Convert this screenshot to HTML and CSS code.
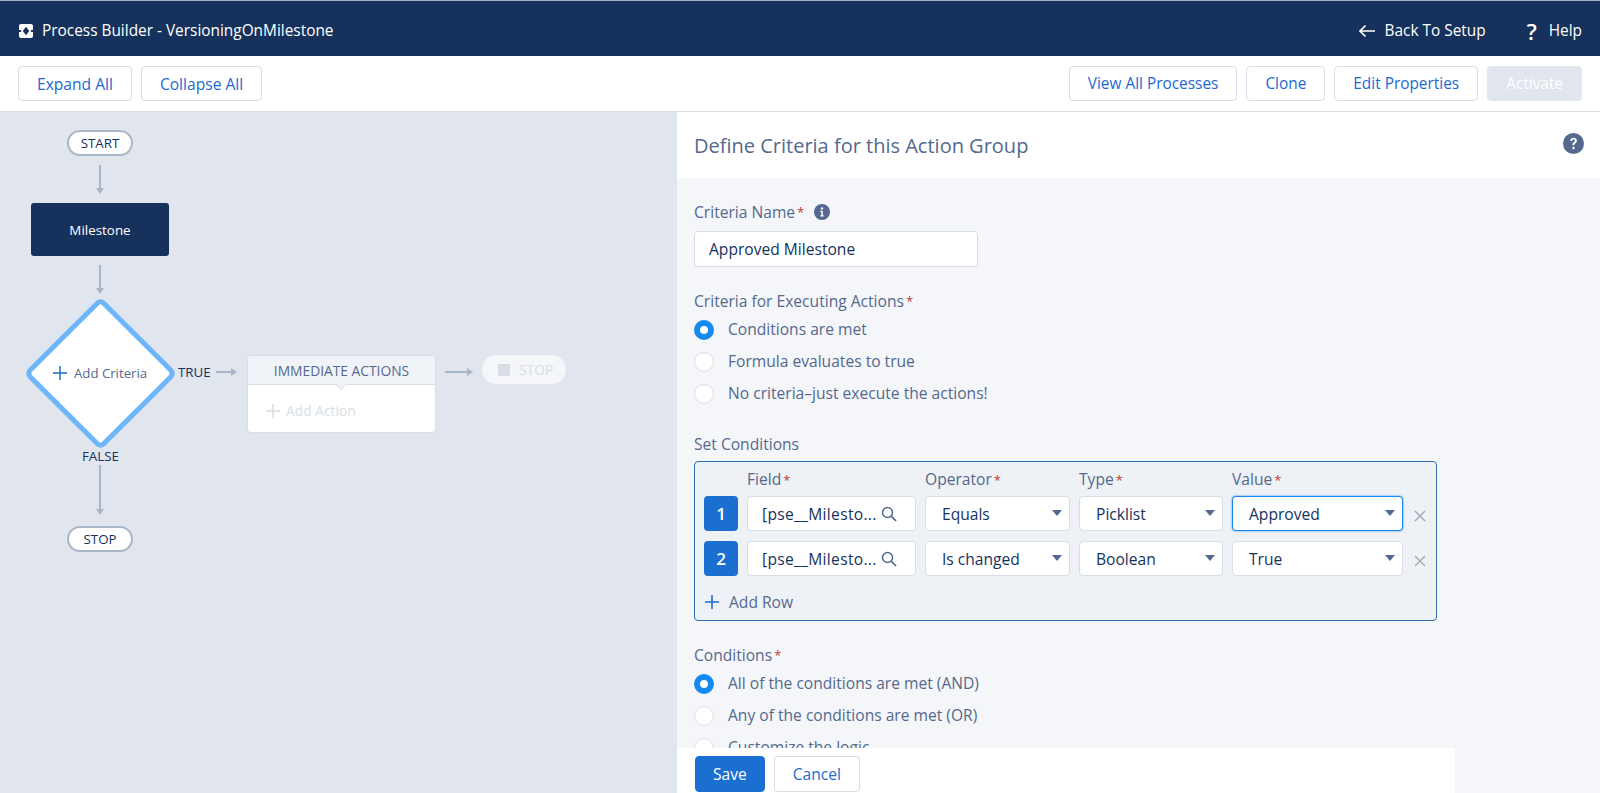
FILE: index.html
```html
<!DOCTYPE html>
<html lang="en">
  <head>
    <meta charset="UTF-8" />
    <meta name="viewport" content="width=device-width, initial-scale=1" />
    <title>Process Builder - VersioningOnMilestone</title>
    <link rel="stylesheet" href="styles.css">
  </head>
  <body>
    <header class="topbar">
      <div class="brand">
        <svg class="brand-icon" viewBox="0 0 14 14"><rect width="14" height="14" rx="2" fill="#fff"/><path d="M7 2.8 10.2 7 7 11.2 3.8 7Z" fill="#16325c"/><path d="M0 6h1.6L2.6 7 1.6 8H0zM14 6h-1.6L11.4 7l1 1H14z" fill="#16325c"/></svg>
        <span>Process Builder - VersioningOnMilestone</span>
      </div>
      <nav class="topnav">
        <a class="topnav-link">
          <svg class="back-icon" viewBox="0 0 18 14"><path d="M17 7H2M7.5 1.5 2 7l5.5 5.5" fill="none" stroke="#fff" stroke-width="1.7"/></svg>
          Back To Setup
        </a>
        <a class="topnav-link help-link"><span class="help-mark">?</span>Help</a>
      </nav>
    </header>

    <div class="toolbar">
      <div class="btn-group">
        <button class="btn">Expand All</button>
        <button class="btn">Collapse All</button>
      </div>
      <div class="btn-group btn-group-right">
        <button class="btn">View All Processes</button>
        <button class="btn">Clone</button>
        <button class="btn">Edit Properties</button>
        <button class="btn btn-disabled">Activate</button>
      </div>
    </div>

    <main class="workspace">
      <section class="canvas">
        <svg class="wires" width="677" height="681" viewBox="0 112 677 681">
          <g fill="none" stroke="#a9b6c8" stroke-width="2">
            <path d="M100 165V190"/>
            <path d="M100 265V290"/>
            <path d="M100 465V511"/>
            <path d="M216 372H233"/>
            <path d="M445 372H469"/>
          </g>
          <g fill="#a9b6c8">
            <path d="M96 188h8l-4 6z"/>
            <path d="M96 288h8l-4 6z"/>
            <path d="M96 509h8l-4 6z"/>
            <path d="M231 368v8l6-4z"/>
            <path d="M467 368v8l6-4z"/>
          </g>
        </svg>

        <div class="pill pill-start">START</div>
        <div class="node-object">Milestone</div>

        <div class="diamond"></div>
        <div class="add-criteria">
          <svg class="plus" viewBox="0 0 14 14"><path d="M7 0V14M0 7H14" stroke="#1b6fd0" stroke-width="1.5"/></svg>
          Add Criteria
        </div>

        <div class="flow-label label-true">TRUE</div>
        <div class="flow-label label-false">FALSE</div>

        <div class="actions">
          <div class="actions-head">IMMEDIATE ACTIONS</div>
          <div class="actions-body">
            <svg class="plus" viewBox="0 0 14 14"><path d="M7 0V14M0 7H14" stroke="#d8dde6" stroke-width="1.5"/></svg>
            Add Action
          </div>
        </div>

        <div class="pill-ghost"><span class="stop-square"></span>STOP</div>
        <div class="pill pill-stop">STOP</div>
      </section>

      <section class="panel">
        <div class="panel-head">
          <h2>Define Criteria for this Action Group</h2>
          <svg class="help-round" viewBox="0 0 20 20"><circle cx="10" cy="10" r="10" fill="#54698d"/><path d="M6.9 7.6C7 5.6 8.3 4.6 10.1 4.6c1.9 0 3.1 1.1 3.1 2.7 0 1.3-.7 1.9-1.6 2.6-.7.5-.9.9-.9 1.7H9c0-1.3.4-2 1.3-2.7.7-.5 1.1-.9 1.1-1.5 0-.8-.5-1.3-1.3-1.3-.9 0-1.4.6-1.5 1.5z" fill="#fff"/><circle cx="10" cy="14.2" r="1.2" fill="#fff"/></svg>
        </div>

        <div class="form">
          <div class="field-label">Criteria Name<span class="req">*</span>
            <svg class="info" viewBox="0 0 16 16"><circle cx="8" cy="8" r="8" fill="#54698d"/><circle cx="8" cy="4.4" r="1.2" fill="#fff"/><path d="M6.4 6.8h2.4v4.4h.9v1.2H6.4v-1.2h.9V8H6.4z" fill="#fff"/></svg>
          </div>
          <div class="input input-name">Approved Milestone</div>

          <div class="field-label gap-top">Criteria for Executing Actions<span class="req">*</span></div>
          <div class="radios">
            <div class="radio-row"><span class="radio radio-on"></span>Conditions are met</div>
            <div class="radio-row"><span class="radio"></span>Formula evaluates to true</div>
            <div class="radio-row"><span class="radio"></span>No criteria–just execute the actions!</div>
          </div>

          <div class="field-label gap-top">Set Conditions</div>
          <div class="cond-box">
            <div class="cond-grid cond-head">
              <span></span>
              <span class="col-label">Field<span class="req">*</span></span>
              <span class="col-label">Operator<span class="req">*</span></span>
              <span class="col-label">Type<span class="req">*</span></span>
              <span class="col-label">Value<span class="req">*</span></span>
            </div>

            <div class="cond-grid cond-row">
              <span class="badge">1</span>
              <div class="input input-lookup"><span class="lookup-text">[pse__Milesto...</span>
                <svg class="search" viewBox="0 0 16 16"><circle cx="6.5" cy="6.5" r="5" fill="none" stroke="#54698d" stroke-width="1.5"/><path d="M10.2 10.2 15 15" stroke="#54698d" stroke-width="1.7"/></svg>
              </div>
              <div class="input select">Equals</div>
              <div class="input select">Picklist</div>
              <div class="input select select-focus">Approved</div>
              <svg class="remove" viewBox="0 0 12 12"><path d="M1 1 11 11M11 1 1 11" stroke="#a8adb5" stroke-width="1.5"/></svg>
            </div>

            <div class="cond-grid cond-row">
              <span class="badge">2</span>
              <div class="input input-lookup"><span class="lookup-text">[pse__Milesto...</span>
                <svg class="search" viewBox="0 0 16 16"><circle cx="6.5" cy="6.5" r="5" fill="none" stroke="#54698d" stroke-width="1.5"/><path d="M10.2 10.2 15 15" stroke="#54698d" stroke-width="1.7"/></svg>
              </div>
              <div class="input select">Is changed</div>
              <div class="input select">Boolean</div>
              <div class="input select">True</div>
              <svg class="remove" viewBox="0 0 12 12"><path d="M1 1 11 11M11 1 1 11" stroke="#a8adb5" stroke-width="1.5"/></svg>
            </div>

            <div class="add-row">
              <svg class="plus" viewBox="0 0 14 14"><path d="M7 0V14M0 7H14" stroke="#1b6fd0" stroke-width="1.6"/></svg>
              Add Row
            </div>
          </div>

          <div class="field-label gap-top">Conditions<span class="req">*</span></div>
          <div class="radios">
            <div class="radio-row"><span class="radio radio-on"></span>All of the conditions are met (AND)</div>
            <div class="radio-row"><span class="radio"></span>Any of the conditions are met (OR)</div>
            <div class="radio-row"><span class="radio"></span>Customize the logic</div>
          </div>
        </div>

        <div class="panel-foot">
          <button class="btn btn-primary">Save</button>
          <button class="btn">Cancel</button>
        </div>
      </section>
    </main>
  </body>
</html>
```

FILE: styles.css
```css
* {
  box-sizing: border-box;
}
html,
body {
  margin: 0;
  height: 793px;
  overflow: hidden;
}
body {
  font-family: "Open Sans", "Noto Sans", sans-serif;
  font-size: 15.6px;
  color: #16325c;
  background: #fff;
}

/* top bar */
.topbar {
  height: 56px;
  background: #16325c;
  border-top: 1px solid #9fb0c6;
  color: #fff;
  display: flex;
  justify-content: space-between;
  align-items: center;
  padding: 4px 18px 0 19px;
  font-size: 15.4px;
}
.brand {
  display: flex;
  align-items: center;
  gap: 9px;
}
.brand-icon {
  width: 14px;
  height: 14px;
}
.topnav {
  display: flex;
  gap: 41px;
}
.topnav-link {
  display: flex;
  align-items: center;
  gap: 9px;
}
.back-icon {
  width: 18px;
  height: 14px;
}
.help-link {
  gap: 12px;
}
.help-mark {
  font-size: 22px;
  font-weight: 600;
  line-height: 20px;
}

/* toolbar */
.toolbar {
  height: 56px;
  display: flex;
  justify-content: space-between;
  align-items: center;
  padding: 0 18px;
  border-bottom: 1px solid #d8dde6;
}
.btn-group {
  display: flex;
  gap: 9px;
}
.btn {
  height: 35px;
  padding: 0 18px;
  font-family: inherit;
  font-size: 15.6px;
  color: #1b6ad0;
  background: #fff;
  border: 1px solid #d8dde6;
  border-radius: 4px;
}
.btn-group-right .btn {
  font-size: 15.4px;
}
.btn-disabled {
  color: #fff;
  background: #e0e5ee;
  border-color: #e0e5ee;
}
.btn-group-right .btn-disabled {
  color: #fff;
}
.btn-primary {
  color: #fff;
  background: #1b6fd0;
  border-color: #1b6fd0;
}

/* layout */
.workspace {
  display: flex;
  height: 681px;
}
.canvas {
  position: relative;
  width: 677px;
  background: #e0e5ee;
}
.panel {
  position: relative;
  flex: 1;
  overflow: hidden;
  background: #f4f6f9;
}

/* flow canvas, coordinates are relative to the canvas top (y 112) */
.wires {
  position: absolute;
  left: 0;
  top: 0;
}
.pill {
  position: absolute;
  left: 67px;
  width: 66px;
  height: 26px;
  display: flex;
  align-items: center;
  justify-content: center;
  font-size: 13.3px;
  background: #fff;
  border: 2px solid #a9b6c8;
  border-radius: 13px;
}
.pill-start {
  top: 18px;
}
.pill-stop {
  top: 414px;
}
.node-object {
  position: absolute;
  left: 31px;
  top: 91px;
  width: 138px;
  height: 53px;
  display: flex;
  align-items: center;
  justify-content: center;
  color: #fff;
  font-size: 13.4px;
  background: #16325c;
  border-radius: 3px;
}
.diamond {
  position: absolute;
  left: 46px;
  top: 207px;
  width: 109px;
  height: 109px;
  background: #fff;
  border: 5px solid #6cb6f9;
  border-radius: 7px;
  transform: rotate(45deg);
}
.add-criteria {
  position: absolute;
  left: 53px;
  top: 251px;
  display: flex;
  align-items: center;
  gap: 7px;
  font-size: 13.2px;
  line-height: 20px;
  color: #54698d;
}
.plus {
  width: 14px;
  height: 14px;
}
.flow-label {
  position: absolute;
  font-size: 13.3px;
  line-height: 18px;
}
.label-true {
  left: 178px;
  top: 251px;
}
.label-false {
  left: 82px;
  top: 335px;
}
.actions {
  position: absolute;
  left: 247px;
  top: 243px;
  width: 189px;
  height: 78px;
  background: #fff;
  border: 1px solid #d8dde6;
  border-radius: 4px;
}
.actions-head {
  position: relative;
  height: 29px;
  display: flex;
  align-items: center;
  justify-content: center;
  font-size: 13.8px;
  color: #54698d;
  background: #f0f3f8;
  border-bottom: 1px solid #d8dde6;
  border-radius: 4px 4px 0 0;
}
.actions-head::after {
  content: "";
  position: absolute;
  left: 88px;
  bottom: -6px;
  width: 9px;
  height: 9px;
  background: #f0f3f8;
  border-right: 1px solid #d8dde6;
  border-bottom: 1px solid #d8dde6;
  transform: rotate(45deg) scale(0.7);
}
.actions-body {
  display: flex;
  align-items: center;
  gap: 6px;
  padding: 16px 0 0 18px;
  font-size: 13.8px;
  color: #d8dde6;
}
.pill-ghost {
  position: absolute;
  left: 482px;
  top: 243px;
  width: 84px;
  height: 29px;
  display: flex;
  align-items: center;
  gap: 9px;
  padding-left: 16px;
  font-size: 13.8px;
  color: #d8dde6;
  background: #f4f6f9;
  border-radius: 15px;
}
.stop-square {
  width: 12px;
  height: 12px;
  background: #d8dde6;
}

/* right panel */
.panel-head {
  height: 66px;
  display: flex;
  justify-content: space-between;
  align-items: center;
  padding: 0 16px 0 17px;
  background: #fff;
}
.panel-head h2 {
  margin: 0;
  font-size: 20px;
  font-weight: 400;
  color: #54698d;
}
.help-round {
  width: 21px;
  height: 21px;
  margin-bottom: 4px;
}
.form {
  padding: 24px 0 0 17px;
}
.field-label {
  display: flex;
  align-items: center;
  height: 20px;
  color: #54698d;
}
.gap-top {
  margin-top: 24px;
}
.req {
  color: #c23934;
  margin-left: 2px;
  font-size: 13px;
}
.info {
  width: 16px;
  height: 16px;
  margin-left: 10px;
}
.input {
  height: 35px;
  display: flex;
  align-items: center;
  padding: 0 14px;
  background: #fff;
  border: 1px solid #d8dde6;
  border-radius: 4px;
}
.input-name {
  width: 284px;
  height: 36px;
  margin-top: 9px;
}
.radios {
  margin-top: 3px;
}
.radio-row {
  height: 32px;
  display: flex;
  align-items: center;
  gap: 14px;
  padding-bottom: 3px;
  color: #54698d;
}
.radio {
  width: 20px;
  height: 20px;
  margin-top: 3px;
  background: #fff;
  border: 1px solid #d8dde6;
  border-radius: 50%;
}
.radio-on {
  border: 6px solid #1589ee;
}
.cond-box {
  width: 743px;
  height: 160px;
  margin-top: 7px;
  padding: 6px 0 0 9px;
  background: #eef1f6;
  border: 1px solid #2f6fae;
  border-radius: 4px;
}
.cond-grid {
  display: grid;
  grid-template-columns: 34px 169px 145px 144px 171px 24px;
  column-gap: 9px;
}
.cond-head {
  height: 20px;
  margin-bottom: 8px;
  align-items: center;
}
.col-label {
  color: #54698d;
}
.cond-row {
  margin-bottom: 10px;
  align-items: center;
}
.badge {
  height: 35px;
  display: flex;
  align-items: center;
  justify-content: center;
  font-size: 17px;
  font-weight: 600;
  color: #fff;
  background: #1b6fd0;
  border-radius: 4px;
}
.input-lookup {
  justify-content: space-between;
  padding-right: 18px;
}
.lookup-text {
  white-space: nowrap;
  letter-spacing: 0.3px;
}
.search {
  width: 16px;
  height: 16px;
  flex-shrink: 0;
}
.select {
  position: relative;
  padding-left: 16px;
}
.select::after {
  content: "";
  position: absolute;
  right: 7px;
  top: 13px;
  border-left: 5px solid transparent;
  border-right: 5px solid transparent;
  border-top: 6px solid #54698d;
}
.select-focus {
  border-color: #1589ee;
  box-shadow: 0 0 2px #1589ee;
}
.remove {
  width: 12px;
  height: 12px;
  margin: 4px 0 0 2px;
}
.add-row {
  display: flex;
  align-items: center;
  gap: 10px;
  height: 20px;
  margin-top: 16px;
  margin-left: 1px;
  color: #54698d;
}

/* footer sits over the scrolled form */
.panel-foot {
  position: absolute;
  left: 0;
  top: 636px;
  width: 778px;
  height: 45px;
  display: flex;
  gap: 9px;
  padding: 8px 0 0 18px;
  background: #fff;
}
.panel-foot .btn {
  height: 36px;
}
.panel-foot .btn-primary {
  padding: 0 17px;
}
```
